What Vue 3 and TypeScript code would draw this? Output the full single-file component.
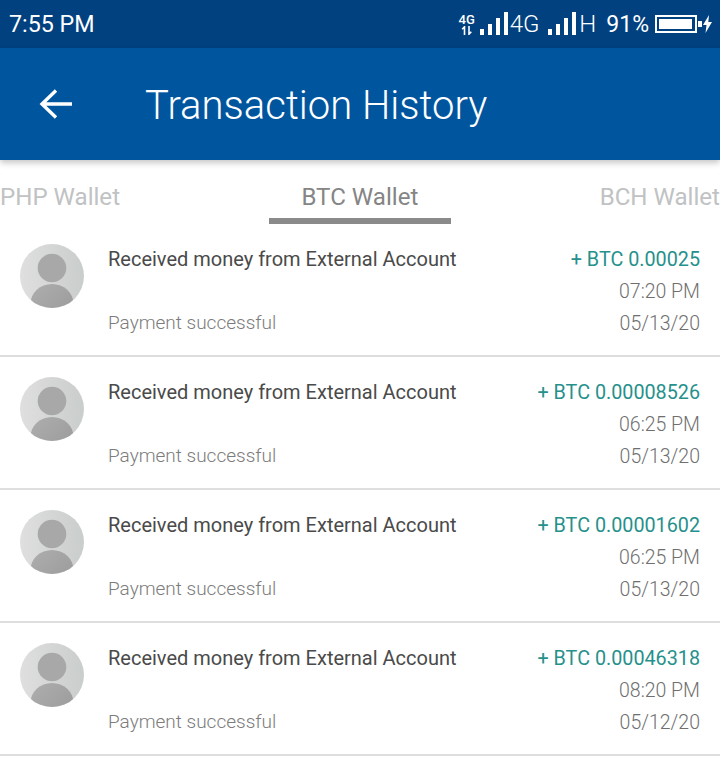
<script setup lang="ts">
interface Transaction {
  amount: string;
  time: string;
  date: string;
}

const transactions: Transaction[] = [
  { amount: '+ BTC 0.00025', time: '07:20 PM', date: '05/13/20' },
  { amount: '+ BTC 0.00008526', time: '06:25 PM', date: '05/13/20' },
  { amount: '+ BTC 0.00001602', time: '06:25 PM', date: '05/13/20' },
  { amount: '+ BTC 0.00046318', time: '08:20 PM', date: '05/12/20' },
];
</script>

<template>
  <div class="screen">
    <div class="status">
      <span class="clock">7:55 PM</span>
      <div class="indicators">
        <div class="net-small">
          <span>4G</span>
          <svg width="12" height="9" viewBox="0 0 12 9">
            <path d="M3.500 9V1M1.200 3.200 3.500.8 3.500 3M8 0v8M10.300 5.800 8 8.200V6" fill="none" stroke="#fff" stroke-width="1.600" />
          </svg>
        </div>
        <svg class="bars" width="28" height="24" viewBox="0 0 28 24">
          <path d="M0 17h4v6H0zM8 12h4v11H8zM16 6h4v17h-4zM24 0h4v23h-4z" fill="#fff" />
        </svg>
        <span class="net first">4G</span>
        <svg class="bars second" width="28" height="24" viewBox="0 0 28 24">
          <path d="M0 17h4v6H0zM8 12h4v11H8zM16 6h4v17h-4zM24 0h4v23h-4z" fill="#fff" />
        </svg>
        <span class="net h">H</span>
        <span class="percent">91%</span>
        <svg class="battery" width="47" height="18" viewBox="0 0 47 18">
          <rect x="1" y="1" width="40" height="16" fill="none" stroke="#fff" stroke-width="2" />
          <rect x="4" y="4" width="33" height="10" fill="#fff" />
          <rect x="43" y="6" width="4" height="6" fill="#fff" />
        </svg>
        <svg class="bolt" width="9" height="18" viewBox="0 0 9 18">
          <path d="M6 0 0 10h3.500L2.500 18 9 7H5.300z" fill="#fff" />
        </svg>
      </div>
    </div>

    <header class="appbar">
      <svg class="back" width="34" height="32" viewBox="0 0 34 32">
        <path d="M33 16H4M17 2.500 3 16l14 13.500" fill="none" stroke="#fff" stroke-width="3.400" />
      </svg>
      <h1>Transaction History</h1>
    </header>

    <nav class="tabs">
      <span class="tab">PHP Wallet</span>
      <span class="tab active">BTC Wallet</span>
      <span class="tab">BCH Wallet</span>
    </nav>

    <ul class="list">
      <li v-for="(tx, i) in transactions" :key="i" class="row">
        <svg class="avatar" width="64" height="64" viewBox="0 0 64 64">
          <defs>
            <linearGradient :id="`disc-${i}`" x1="0" y1="0" x2="1" y2="0">
              <stop offset="0" stop-color="#dfdfdf" />
              <stop offset="1" stop-color="#c9cdcb" />
            </linearGradient>
            <linearGradient :id="`body-${i}`" x1="0" y1="0" x2="1" y2="1">
              <stop offset="0" stop-color="#aeaeae" />
              <stop offset="1" stop-color="#989898" />
            </linearGradient>
            <clipPath :id="`clip-${i}`">
              <circle cx="32" cy="32" r="32" />
            </clipPath>
          </defs>
          <circle cx="32" cy="32" r="32" :fill="`url(#disc-${i})`" />
          <g :clip-path="`url(#clip-${i})`">
            <circle cx="32" cy="24" r="14.300" fill="#a8a8a8" />
            <ellipse cx="32" cy="60" rx="21.500" ry="20" :fill="`url(#body-${i})`" />
          </g>
        </svg>
        <div class="info">
          <div class="title">Received money from External Account</div>
          <div class="state">Payment successful</div>
        </div>
        <div class="meta">
          <div class="amount">{{ tx.amount }}</div>
          <div class="time">{{ tx.time }}</div>
          <div class="date">{{ tx.date }}</div>
        </div>
      </li>
    </ul>
  </div>
</template>

<style>
html,
body {
  margin: 0;
  background: #fff;
}
</style>

<style scoped>
.screen {
  width: 720px;
  height: 763px;
  overflow: hidden;
  background: #fff;
  font-family: Roboto, "Liberation Sans", sans-serif;
}

.status {
  height: 48px;
  display: flex;
  align-items: center;
  justify-content: space-between;
  padding: 0 8px 0 9px;
  box-sizing: border-box;
  background: #014180;
  color: #fff;
}

.clock {
  font-size: 23.250px;
}

.indicators {
  display: flex;
  align-items: center;
}

.net-small {
  width: 16px;
  margin-right: 5px;
  display: flex;
  flex-direction: column;
  align-items: center;
  font-size: 13px;
  line-height: 13px;
  font-weight: 500;
}

.net {
  font-size: 24px;
  font-weight: 300;
}

.first {
  margin-left: 2px;
}

.second {
  margin-left: 8.200px;
}

.h {
  margin-left: 3.700px;
}

.percent {
  margin-left: 10px;
  font-size: 23px;
}

.battery {
  margin-left: 6px;
}

.bolt {
  margin-left: 1px;
}

.appbar {
  position: relative;
  height: 112px;
  display: flex;
  align-items: center;
  padding-left: 39px;
  background: #00569e;
  box-shadow: 0 3px 6px rgba(0, 0, 0, 0.22);
}

.appbar h1 {
  margin: 2px 0 0 72px;
  font-size: 40px;
  font-weight: 300;
  color: #fff;
}

.tabs {
  height: 64px;
  display: flex;
  justify-content: space-between;
}

.tab {
  height: 64px;
  box-sizing: border-box;
  padding-top: 23px;
  font-size: 24.100px;
  line-height: 28px;
  color: #c0c2c3;
  text-align: center;
  white-space: nowrap;
}

.tab.active {
  width: 182px;
  color: #858585;
  border-bottom: 6px solid #8a8a8a;
}

.list {
  margin: 0;
  padding: 0;
  list-style: none;
}

.row {
  height: 133px;
  box-sizing: border-box;
  display: flex;
  padding: 20px 20px 0;
  border-bottom: 2px solid #dedede;
}

.avatar {
  flex: none;
}

.info {
  flex: 1;
  margin-left: 24px;
  padding-top: 2px;
}

.title {
  font-size: 20px;
  line-height: 26px;
  color: #4a4a4a;
}

.state {
  margin-top: 38px;
  font-size: 19px;
  font-weight: 300;
  line-height: 26px;
  color: #7c7c7c;
}

.meta {
  padding-top: 3px;
  text-align: right;
  font-size: 19.750px;
  line-height: 26px;
}

.amount {
  color: #26908c;
}

.time,
.date {
  margin-top: 6px;
  font-size: 19.500px;
  font-weight: 300;
  color: #6f6f6f;
}
</style>
